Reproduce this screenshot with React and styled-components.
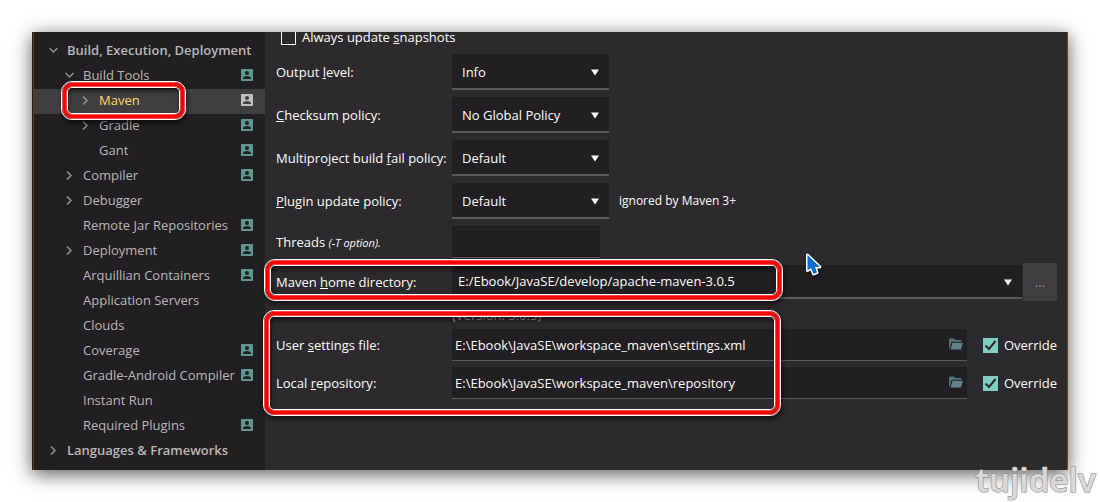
import React from 'react';
import styled, { createGlobalStyle, css } from 'styled-components';

const GlobalStyle = createGlobalStyle`
    * {
        box-sizing: border-box;
    }

    body {
        margin: 0;
        background: #fff;
        font-family: "Open Sans", "Noto Sans", sans-serif;
        font-size: 13px;
        line-height: 18px;
    }

    button, input, select {
        font: inherit;
    }
`;

const Page = styled.div`
    position: relative;
    padding: 32px;
    overflow: hidden;
`;

const Window = styled.div`
    position: relative;
    display: flex;
    background: #2d2a2e;
    border-left: 1px solid #221f22;
    border-right: 1px solid #6b4a1e;
    box-shadow: 0 4px 18px rgba(0, 0, 0, 0.65);
`;

const Sidebar = styled.nav`
    flex: 0 0 232px;
    min-width: 0;
    padding: 7px 0 6px;
    background: #221f22;
    border-left: 1px solid #5a4220;
`;

const TreeItem = styled.a`
    display: flex;
    align-items: center;
    gap: 8px;
    height: 25px;
    padding-right: 12px;
    padding-bottom: 3px;
    padding-left: ${({ $level }) => 14 + $level * 16}px;
    color: ${({ $active }) => ($active ? '#ffd866' : '#b9b7b8')};
    background: ${({ $active }) => ($active ? '#403e41' : 'transparent')};
    font-weight: ${({ $level }) => ($level === 0 ? 600 : 400)};
    text-decoration: none;
    white-space: nowrap;
`;

const TreeLabel = styled.span`
    flex: 1;
    min-width: 0;
`;

const ArrowSlot = styled.span`
    display: flex;
    width: 11px;
    color: #939293;
`;

const Content = styled.main`
    flex: 1;
    min-width: 0;
    overflow: hidden;
    padding: 0 10px 0 11px;
    color: #fcfcfa;
`;

const Form = styled.form`
    display: flex;
    flex-direction: column;
    margin-top: -4px;
`;

const FormRow = styled.div`
    display: grid;
    grid-template-columns: 176px 1fr;
    align-items: center;
    margin-bottom: ${({ $gap = 7 }) => $gap}px;
`;

const FieldLabel = styled.label`
    white-space: nowrap;

    small {
        font-size: 11px;
        font-style: italic;
    }
`;

const FieldGroup = styled.div`
    display: flex;
    align-items: center;
`;

const CheckLabel = styled.label`
    display: flex;
    align-items: center;
    gap: 6px;
    margin: ${({ $top }) => ($top ? '0 0 8px 5px' : '0 0 0 16px')};
    white-space: nowrap;
`;

const CheckBox = styled.input`
    appearance: none;
    width: 15px;
    height: 15px;
    margin: 0;
    border: 1px solid #fcfcfa;

    &:checked {
        border: none;
        background: #7fcdc3;
    }
`;

const CheckWrap = styled.span`
    position: relative;
    display: flex;

    svg {
        position: absolute;
        top: 0;
        left: 0;
        pointer-events: none;
    }
`;

const field = css`
    color: #fcfcfa;
    background: #221f22;
    border: none;
    border-radius: 0;
    outline: none;
`;

const SelectWrap = styled.span`
    position: relative;
    display: flex;
    flex: ${({ $grow }) => ($grow ? '1' : '0 0 157px')};
    min-width: 0;

    svg {
        position: absolute;
        top: 50%;
        right: 9px;
        margin-top: -3px;
        pointer-events: none;
    }
`;

const Select = styled.select`
    ${field}
    appearance: none;
    width: 100%;
    height: ${({ $low }) => ($low ? 34 : 36)}px;
    padding: ${({ $low }) => ($low ? '0 24px 0 6px' : '2px 24px 0 10px')};
    border-bottom: 2px solid #5b595c;
`;

const TextBox = styled.input`
    ${field}
    flex: ${({ $short }) => ($short ? '0 0 148px' : '1')};
    min-width: 0;
    height: 32px;
    padding: 0 24px 0 3px;
    border-bottom: 1px solid #5b595c;
`;

const FileField = styled.span`
    position: relative;
    display: flex;
    flex: 1;
    min-width: 0;
`;

const BrowseButton = styled.button`
    position: absolute;
    top: 8px;
    right: 3px;
    display: flex;
    padding: 0;
    border: none;
    background: none;
`;

const MoreButton = styled.button`
    width: 34px;
    height: 38px;
    margin-left: 1px;
    padding: 0;
    color: #939293;
    background: #403e41;
    border: none;
`;

const Hint = styled.span`
    margin-left: 10px;
    font-size: 12px;
`;

const Version = styled.p`
    height: 18px;
    margin: 5px 0 5px 176px;
    color: #a5a4a5;
`;

const Highlight = styled.div`
    position: absolute;
    top: ${({ $top }) => $top}px;
    left: ${({ $left }) => $left}px;
    width: ${({ $width }) => $width}px;
    height: ${({ $height }) => $height}px;
    border: 1px solid #fff;
    border-radius: 11px;
    box-shadow: 1px 3px 5px rgba(0, 0, 0, 0.6);
    pointer-events: none;

    &::before {
        content: '';
        position: absolute;
        inset: 0;
        border: 1px solid #ff4848;
        border-radius: 10px;
        box-shadow: inset 0 0 0 3px #fe0000;
    }

    &::after {
        content: '';
        position: absolute;
        inset: 4px;
        border: 1px solid #ff4848;
        border-radius: 6px;
        box-shadow: inset 0 0 0 1px #fff, inset 1px 4px 5px rgba(0, 0, 0, 0.6);
    }
`;

const Pointer = styled.svg`
    position: absolute;
    top: 252px;
    left: 805px;
    filter: drop-shadow(1px 2px 1px rgba(0, 0, 0, 0.5));
`;

const Watermark = styled.span`
    position: absolute;
    right: 4px;
    bottom: 2px;
    color: #d8d8d8;
    font-family: "Noto Sans", sans-serif;
    font-size: 33px;
    font-weight: 600;
    line-height: 40px;
    -webkit-text-stroke: 1px #808080;
    paint-order: stroke;
`;

const TREE = [
    { label: 'Build, Execution, Deployment', level: 0, arrow: 'down' },
    { label: 'Build Tools', level: 1, arrow: 'down', badge: true },
    { label: 'Maven', level: 2, arrow: 'right', badge: true, active: true },
    { label: 'Gradle', level: 2, arrow: 'right', badge: true },
    { label: 'Gant', level: 2, badge: true },
    { label: 'Compiler', level: 1, arrow: 'right', badge: true },
    { label: 'Debugger', level: 1, arrow: 'right' },
    { label: 'Remote Jar Repositories', level: 1, badge: true },
    { label: 'Deployment', level: 1, arrow: 'right', badge: true },
    { label: 'Arquillian Containers', level: 1, badge: true },
    { label: 'Application Servers', level: 1 },
    { label: 'Clouds', level: 1 },
    { label: 'Coverage', level: 1, badge: true },
    { label: 'Gradle-Android Compiler', level: 1, badge: true },
    { label: 'Instant Run', level: 1 },
    { label: 'Required Plugins', level: 1, badge: true },
    { label: 'Languages & Frameworks', level: 0, arrow: 'right' },
];

function Arrow({ direction }) {
    return (
        <svg width="11" height="11" viewBox="0 0 11 11" fill="none" stroke="currentColor" strokeWidth="1.5">
            <path d={direction === 'down' ? 'M1.5 3 5.5 7 9.5 3' : 'M3 1.5 7 5.5 3 9.5'} />
        </svg>
    );
}

function ProjectBadge({ active }) {
    return (
        <svg width="12" height="12" viewBox="0 0 12 12">
            <rect width="12" height="12" rx="1" fill={active ? '#c1c0c0' : '#5f9790'} />
            <g fill={active ? '#403e41' : '#221f22'}>
                <circle cx="6" cy="4" r="2" />
                <path d="M2 10V9c0-1.300 2.600-2 4-2s4 .7 4 2v1z" />
            </g>
        </svg>
    );
}

function SelectArrow() {
    return (
        <svg width="10" height="7" viewBox="0 0 10 7">
            <path d="M1 .5h8L5 6.500z" fill="#fcfcfa" />
        </svg>
    );
}

function FolderIcon() {
    return (
        <svg width="16" height="14" viewBox="0 0 16 14">
            <path d="M1 11V2.500Q1 1.500 2 1.500h4l1.500 1.500h5q1 0 1 1v.8H4.500Q3.500 4.800 3.200 5.800L1.500 12z" fill="#55707e" />
            <path d="M4.600 5.800H15L13.200 12q-.2.500-.8.500H2.500z" fill="#64808e" />
        </svg>
    );
}

function PolicySelect({ id, label, value, hint }) {
    return (
        <FormRow>
            <FieldLabel htmlFor={id}>{label}</FieldLabel>
            <FieldGroup>
                <SelectWrap>
                    <Select id={id} defaultValue={value}>
                        <option>{value}</option>
                    </Select>
                    <SelectArrow />
                </SelectWrap>
                {hint && <Hint>{hint}</Hint>}
            </FieldGroup>
        </FormRow>
    );
}

function PathRow({ id, label, value }) {
    return (
        <FormRow $gap={6}>
            <FieldLabel htmlFor={id}>{label}</FieldLabel>
            <FieldGroup>
                <FileField>
                    <TextBox id={id} type="text" defaultValue={value} />
                    <BrowseButton type="button" aria-label="Browse">
                        <FolderIcon />
                    </BrowseButton>
                </FileField>
                <CheckLabel>
                    <CheckWrap>
                        <CheckBox type="checkbox" defaultChecked />
                        <svg width="15" height="15" viewBox="0 0 15 15" fill="none">
                            <path d="M2.500 7.500 6 11 12.500 3" stroke="#2d2a2e" strokeWidth="2" />
                        </svg>
                    </CheckWrap>
                    Override
                </CheckLabel>
            </FieldGroup>
        </FormRow>
    );
}

function App() {
    return (
        <Page>
            <GlobalStyle />
            <Window>
                <Sidebar>
                    {TREE.map((item) => (
                        <TreeItem key={item.label} href="#" $level={item.level} $active={item.active}>
                            <ArrowSlot>{item.arrow && <Arrow direction={item.arrow} />}</ArrowSlot>
                            <TreeLabel>{item.label}</TreeLabel>
                            {item.badge && <ProjectBadge active={item.active} />}
                        </TreeItem>
                    ))}
                </Sidebar>

                <Content>
                    <Form>
                        <CheckLabel $top>
                            <CheckBox type="checkbox" />
                            <span>Always update <u>s</u>napshots</span>
                        </CheckLabel>

                        <PolicySelect id="output" label={<>Output <u>l</u>evel:</>} value="Info" />
                        <PolicySelect id="checksum" label={<><u>C</u>hecksum policy:</>} value="No Global Policy" />
                        <PolicySelect id="fail" label={<>Multiproject build <u>f</u>ail policy:</>} value="Default" />
                        <PolicySelect
                            id="plugin"
                            label={<><u>P</u>lugin update policy:</>}
                            value="Default"
                            hint="ignored by Maven 3+"
                        />

                        <FormRow $gap={5}>
                            <FieldLabel htmlFor="threads">Threads <small>(-T option).</small></FieldLabel>
                            <FieldGroup>
                                <TextBox id="threads" type="text" $short />
                            </FieldGroup>
                        </FormRow>

                        <FormRow $gap={0}>
                            <FieldLabel htmlFor="home">Maven <u>h</u>ome directory:</FieldLabel>
                            <FieldGroup>
                                <SelectWrap $grow>
                                    <Select id="home" $low defaultValue="E:/Ebook/JavaSE/develop/apache-maven-3.0.5">
                                        <option>E:/Ebook/JavaSE/develop/apache-maven-3.0.5</option>
                                    </Select>
                                    <SelectArrow />
                                </SelectWrap>
                                <MoreButton type="button">...</MoreButton>
                            </FieldGroup>
                        </FormRow>

                        <Version>(Version: 3.0.5)</Version>

                        <PathRow
                            id="settings"
                            label={<>User <u>s</u>ettings file:</>}
                            value="E:\Ebook\JavaSE\workspace_maven\settings.xml"
                        />
                        <PathRow
                            id="repository"
                            label={<>Local <u>r</u>epository:</>}
                            value="E:\Ebook\JavaSE\workspace_maven\repository"
                        />
                    </Form>
                </Content>
            </Window>

            <Highlight $left={61} $top={81} $width={125} $height={39} />
            <Highlight $left={264} $top={259} $width={519} $height={42} />
            <Highlight $left={263} $top={310} $width={518} $height={106} />

            <Pointer width="18" height="26" viewBox="0 0 18 26">
                <path
                    d="M2.500 3V18.500L6 16 8.500 22 12 20.500 10 15H15z"
                    fill="#0a6cce"
                    stroke="#fff"
                    strokeWidth="3"
                    strokeLinejoin="round"
                    paintOrder="stroke"
                />
            </Pointer>
            <Watermark>tujidelv</Watermark>
        </Page>
    );
}

export default App;
